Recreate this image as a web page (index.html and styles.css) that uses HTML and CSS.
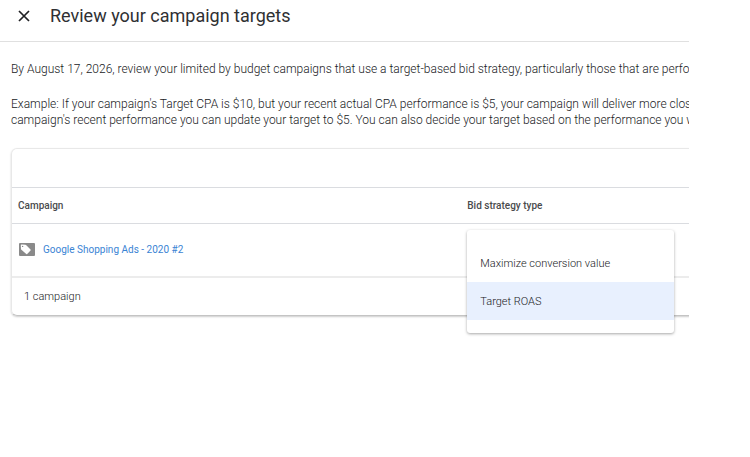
FILE: index.html
```html
<!DOCTYPE html>
<html lang="en">

<head>
    <meta charset="UTF-8">
    <meta name="viewport" content="width=device-width, initial-scale=1.0">
    <title>Review your campaign targets</title>
    <link rel="stylesheet" href="styles.css">
</head>

<body>

    <div class="panel">
        <header class="header">
            <button class="close" type="button" aria-label="Close">
                <svg viewBox="0 0 12 12" width="12" height="12">
                    <path d="M1 1L11 11M11 1L1 11" fill="none" stroke="#202124" stroke-width="1.7" />
                </svg>
            </button>
            <h1>Review your campaign targets</h1>
        </header>

        <main class="content">
            <p>By August 17, 2026, review your limited by budget campaigns that use a target-based bid strategy, particularly those that are perform</p>
            <p>
                Example: If your campaign's Target CPA is $10, but your recent actual CPA performance is $5, your campaign will deliver more close<br>
                campaign's recent performance you can update your target to $5. You can also decide your target based on the performance you wa
            </p>

            <div class="card">
                <div class="toolbar"></div>
                <table class="campaigns">
                    <thead>
                        <tr>
                            <th class="col-name">Campaign</th>
                            <th>Bid strategy type</th>
                        </tr>
                    </thead>
                    <tbody>
                        <tr>
                            <td>
                                <div class="campaign">
                                    <svg viewBox="0 0 16 13" width="16" height="13">
                                        <rect width="16" height="13" rx="1" fill="#8a8a8a" />
                                        <path d="M1.8 2.4Q1.8 1.6 2.6 1.6L6.4 1.8Q6.9 1.8 7.3 2.2L11.5 6.4Q12.1 7 11.5 7.6L8.2 10.9Q7.6 11.4 7 10.8L2.4 6.8Q2 6.4 2 5.9Z" fill="#fff" />
                                        <circle cx="3.6" cy="3.4" r=".7" fill="#8a8a8a" />
                                    </svg>
                                    <a href="#">Google Shopping Ads - 2020 #2</a>
                                </div>
                            </td>
                            <td class="strategy">
                                <!-- bid strategy menu, opened over the table -->
                                <div class="menu" role="listbox" aria-label="Bid strategy type">
                                    <button type="button" role="option" aria-selected="false">Maximize conversion value</button>
                                    <button class="current" type="button" role="option" aria-selected="true">Target ROAS</button>
                                </div>
                            </td>
                        </tr>
                    </tbody>
                    <tfoot>
                        <tr>
                            <td colspan="2">1 campaign</td>
                        </tr>
                    </tfoot>
                </table>
            </div>
        </main>
    </div>

</body>

</html>
```
FILE: styles.css
```css
* {
    box-sizing: border-box;
    margin: 0;
    padding: 0;
}

body {
    background-color: #fff;
    font-family: Roboto, "Liberation Sans", sans-serif;
    font-size: 12px;
    font-weight: 300;
    line-height: 16px;
    color: #202124;
}

button {
    border: none;
    background: none;
    font: inherit;
    color: inherit;
    cursor: pointer;
}

a {
    color: #3a84d4;
    text-decoration: none;
}

.panel {
    min-height: 100vh;
    margin-right: 61px;
    overflow: hidden;
}

.header {
    display: flex;
    align-items: center;
    gap: 16px;
    height: 42px;
    padding: 0 14px 9px;
    border-bottom: 1px solid #e0e0e0;
}

.close {
    display: flex;
    align-items: center;
    justify-content: center;
    width: 20px;
    height: 20px;
}

h1 {
    font-size: 18px;
    font-weight: 400;
    line-height: 24px;
    color: #2f3033;
}

.content {
    padding: 19px 0 0 11px;
}

.content p {
    margin-bottom: 19px;
    white-space: nowrap;
}

/* the card runs on past the right edge of the panel */
.card {
    margin: 20px -26px 0 0;
    border: 1px solid #e8e8e8;
    border-bottom-color: #c4c4c4;
    border-radius: 6px;
    box-shadow: 0 1px 2px rgba(0, 0, 0, 0.2);
}

.toolbar {
    height: 38px;
}

.campaigns {
    width: 100%;
    table-layout: fixed;
    border-collapse: collapse;
    font-size: 11px;
}

.campaigns th {
    height: 36px;
    padding: 0 6px;
    border-top: 1px solid #dadce0;
    border-bottom: 1px solid #dadce0;
    font-size: 10px;
    font-weight: 500;
    text-align: left;
    color: #4a4b4d;
}

.campaigns .col-name {
    width: 64%;
}

.campaigns td {
    height: 53px;
    padding: 0 7px;
}

.campaigns tfoot td {
    height: 38px;
    padding: 2px 12px 0;
    border-top: 2px solid #ececec;
}

.campaign {
    display: flex;
    align-items: center;
    gap: 8px;
}

.campaign a {
    font-size: 10px;
    font-weight: 400;
}

.campaigns .strategy {
    position: relative;
}

.menu {
    position: absolute;
    top: 6px;
    left: 6px;
    width: 207px;
    padding: 14px 0 13px;
    border-radius: 3px;
    background-color: #fff;
    box-shadow: 0 1px 3px rgba(0, 0, 0, 0.35);
}

.menu button {
    display: block;
    width: 100%;
    height: 38px;
    padding: 2px 13px 0;
    text-align: left;
}

.menu .current {
    background-color: #e8f0fe;
}
```
